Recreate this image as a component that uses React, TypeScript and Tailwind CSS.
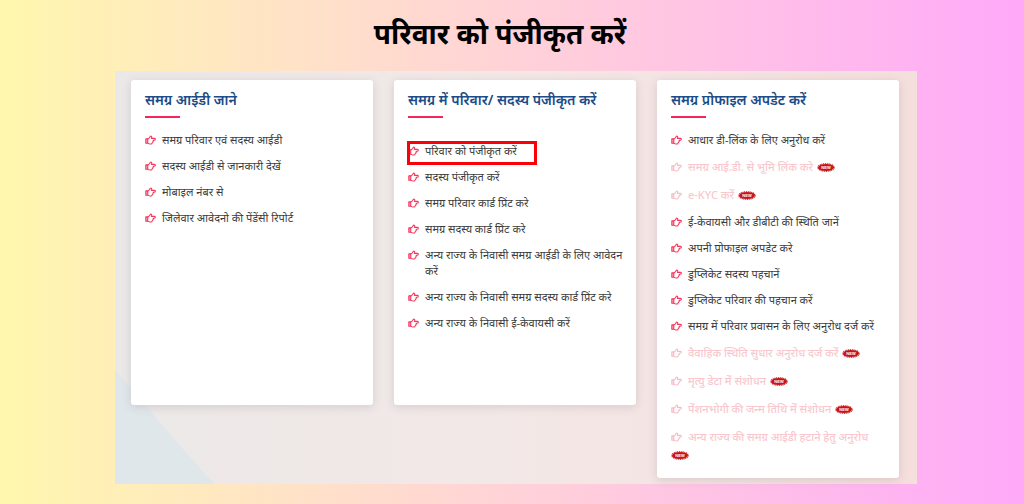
import clsx from 'clsx'

type Item = {
  label: string
  isNew?: boolean
  marked?: boolean
}

type Card = {
  title: string
  items: Item[]
  spaced?: boolean
  tall?: boolean
}

const cards: Card[] = [
  {
    title: 'समग्र आईडी जाने',
    items: [
      { label: 'समग्र परिवार एवं सदस्य आईडी' },
      { label: 'सदस्य आईडी से जानकारी देखें' },
      { label: 'मोबाइल नंबर से' },
      { label: 'जिलेवार आवेदनो की पेंडेंसी रिपोर्ट' },
    ],
  },
  {
    title: 'समग्र में परिवार/ सदस्य पंजीकृत करें',
    spaced: true,
    items: [
      { label: 'परिवार को पंजीकृत करें', marked: true },
      { label: 'सदस्य पंजीकृत करें' },
      { label: 'समग्र परिवार कार्ड प्रिंट करे' },
      { label: 'समग्र सदस्य कार्ड प्रिंट करे' },
      { label: 'अन्य राज्य के निवासी समग्र आईडी के लिए आवेदन करें' },
      { label: 'अन्य राज्य के निवासी समग्र सदस्य कार्ड प्रिंट करे' },
      { label: 'अन्य राज्य के निवासी ई-केवायसी करें' },
    ],
  },
  {
    title: 'समग्र प्रोफाइल अपडेट करें',
    tall: true,
    items: [
      { label: 'आधार डी-लिंक के लिए अनुरोध करें' },
      { label: 'समग्र आई.डी. से भूमि लिंक करे', isNew: true },
      { label: 'e-KYC करें', isNew: true },
      { label: 'ई-केवायसी और डीबीटी की स्थिति जानें' },
      { label: 'अपनी प्रोफाइल अपडेट करे' },
      { label: 'डुप्लिकेट सदस्य पहचानें' },
      { label: 'डुप्लिकेट परिवार की पहचान करें' },
      { label: 'समग्र में परिवार प्रवासन के लिए अनुरोध दर्ज करें' },
      { label: 'वैवाहिक स्थिति सुधार अनुरोध दर्ज करें', isNew: true },
      { label: 'मृत्यु डेटा में संशोधन', isNew: true },
      { label: 'पेंशनभोगी की जन्म तिथि में संशोधन', isNew: true },
      { label: 'अन्य राज्य की समग्र आईडी हटाने हेतु अनुरोध', isNew: true },
    ],
  },
]

function HandIcon({ className }: { className?: string }) {
  return (
    <svg viewBox="0 0 20 18" fill="none" stroke="currentColor" strokeWidth="2" strokeLinejoin="round" className={className} aria-hidden="true">
      <path d="M1.5 7H5V15H1.5Z" fill="currentColor" fillOpacity="0.4" />
      <path d="M5 7C7.5 6.6 8.5 5 9.5 2.8C10.2 1.4 12.6 1.8 12.2 4L11.8 6H17C19.4 6 19.4 9.4 17 9.4H14.8C15.6 10.4 15.2 11.6 14.2 12C14.4 13.2 13.8 14 12.8 14.4C12.8 15.8 12 16.4 10.8 16.4H8.6C7 16.4 6.4 15 5 15" />
    </svg>
  )
}

function NewBadge() {
  return (
    <svg viewBox="0 0 36 18" className="h-[9px] w-[18px] shrink-0" role="img" aria-label="NEW">
      <ellipse cx="18" cy="9" rx="16" ry="7" fill="#c8141b" />
      <ellipse cx="18" cy="9" rx="16.5" ry="7.5" fill="none" stroke="#c8141b" strokeWidth="2.5" strokeDasharray="2 1.5" />
      <text x="18" y="12" textAnchor="middle" fontSize="8" fontWeight="700" fill="#fff" fontFamily="Liberation Sans, sans-serif">
        NEW
      </text>
    </svg>
  )
}

function ListItem({ item }: { item: Item }) {
  return (
    <li className="relative">
      <a
        href="#"
        className={clsx(
          'flex items-start text-[11px]',
          item.isNew ? 'flex-wrap gap-x-1 leading-[18px] font-medium text-[#f9c8ce]' : 'gap-x-[6px] leading-4 text-[#3c3c3c]'
        )}
      >
        <HandIcon
          className={clsx('h-[10px] w-[11px] shrink-0', item.isNew ? 'mt-1 mr-[2px] text-[#f9b9c6]' : 'mt-[3px] text-[#f5365c]')}
        />
        <span>{item.label}</span>
        {item.isNew && (
          <span className="flex h-[18px] items-center">
            <NewBadge />
          </span>
        )}
      </a>
      {item.marked && (
        <span className="absolute -top-[2px] -left-[1px] h-6 w-[130px] border-3 border-[#fb0007]" />
      )}
    </li>
  )
}

function LinkCard({ card }: { card: Card }) {
  return (
    <section
      className={clsx(
        'rounded-[3px] bg-white pt-2 pr-[10px] pl-[14px] shadow-[0_2px_10px_rgba(80,60,80,0.16)]',
        card.tall ? 'pb-[14px]' : 'min-h-[325px]'
      )}
    >
      <h2 className="text-sm leading-6 font-semibold whitespace-nowrap text-[#1d4b87]">{card.title}</h2>
      <div className="mt-1 h-[2px] w-[35px] bg-[#f5265c]" />
      <ul className={clsx('flex flex-col gap-[10px]', card.spaced ? 'mt-[25px]' : 'mt-[14px]')}>
        {card.items.map((item) => (
          <ListItem key={item.label} item={item} />
        ))}
      </ul>
    </section>
  )
}

export default function App() {
  return (
    <main
      lang="hi"
      className="min-h-screen bg-linear-to-r from-[#fff7ad] to-[#ffa9f9] pr-[107px] pb-5 pl-[115px] font-['Noto_Sans','Noto_Sans_Devanagari',sans-serif]"
    >
      <h1 className="pt-[9px] pr-8 pb-[14px] text-center text-[28px] leading-[48px] font-bold text-black">
        परिवार को पंजीकृत करें
      </h1>

      <div className="relative bg-linear-to-r from-[#ebe9e8] via-[#f3e8e7] to-[#f5dfdd]">
        {/* Blue corner of the backdrop */}
        <svg viewBox="0 0 100 114" className="absolute bottom-0 left-0 w-[100px]" aria-hidden="true">
          <path d="M0 0C28 32 62 74 100 114H0Z" fill="#e0e7eb" />
        </svg>

        <div className="relative grid grid-cols-3 items-start gap-[21px] pt-[9px] pr-[18px] pb-[6px] pl-4">
          {cards.map((card) => (
            <LinkCard key={card.title} card={card} />
          ))}
        </div>
      </div>
    </main>
  )
}
